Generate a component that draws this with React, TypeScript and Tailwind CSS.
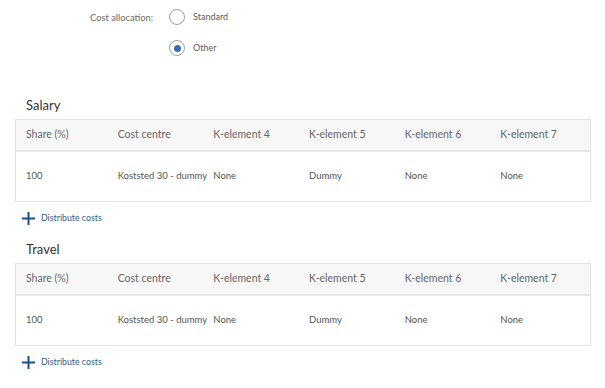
import { Fragment } from "react";

const columns = ["Share (%)", "Cost centre", "K-element 4", "K-element 5", "K-element 6", "K-element 7"];

interface Section {
  title: string;
  rows: string[][];
}

const sections: Section[] = [
  { title: "Salary", rows: [["100", "Koststed 30 - dummy", "None", "Dummy", "None", "None"]] },
  { title: "Travel", rows: [["100", "Koststed 30 - dummy", "None", "Dummy", "None", "None"]] },
];

function Radio({ label, checked }: { label: string; checked?: boolean }) {
  return (
    <label className="flex items-center gap-[8px]">
      <span className="flex h-[16px] w-[16px] items-center justify-center rounded-full border border-[#9a9fa5] bg-white">
        {checked && <span className="h-[7px] w-[7px] rounded-full bg-[#3572b0]" />}
      </span>
      <span className="text-[9px] text-[#5a5a5a]">{label}</span>
    </label>
  );
}

function PlusIcon() {
  return (
    <svg width="13" height="13" viewBox="0 0 13 13" className="shrink-0">
      <path d="M6.5 0v13M0 6.5h13" stroke="#1f4f7e" strokeWidth="2" />
    </svg>
  );
}

function CostTable({ rows }: { rows: string[][] }) {
  return (
    <div className="mx-[15px] w-[576px] border border-[#e3e3e3]">
      <div className="grid h-[32px] grid-cols-6 items-center border-b-2 border-[#e6e6e6] bg-[#f7f7f7] text-[10.5px] text-[#666]">
        {columns.map((c, i) => (
          <div key={c} className={i === 0 ? "pl-[10px]" : "pl-[6px]"}>
            {c}
          </div>
        ))}
      </div>
      {rows.map((row, r) => (
        <div key={r} className="grid h-[49px] grid-cols-6 items-center whitespace-nowrap text-[9.5px] text-[#555]">
          {row.map((v, i) => (
            <div key={i} className={i === 0 ? "pl-[10px]" : "pl-[6px]"}>
              {v}
            </div>
          ))}
        </div>
      ))}
    </div>
  );
}

export default function App() {
  return (
    <div className="h-[388px] w-[605px] overflow-hidden bg-white font-['Lato',sans-serif]">
      <div className="flex pt-[9px]">
        <div className="w-[153px] pt-[2px] text-right text-[9.3px] text-[#6a6a6a]">Cost allocation:</div>
        <div className="ml-[16px] flex flex-col gap-[15px]">
          <Radio label="Standard" />
          <Radio label="Other" checked />
        </div>
      </div>

      <div className="mt-[39px]">
        {sections.map((s) => (
          <Fragment key={s.title}>
            <div className="h-[24px] pl-[26px] text-[13px] leading-[20px] text-[#333]">{s.title}</div>
            <CostTable rows={s.rows} />
            <div className="mb-[5px] flex h-[32px] items-center gap-[6px] pl-[22px]">
              <PlusIcon />
              <span className="text-[8.8px] text-[#2a5c8e]">Distribute costs</span>
            </div>
          </Fragment>
        ))}
      </div>
    </div>
  );
}
